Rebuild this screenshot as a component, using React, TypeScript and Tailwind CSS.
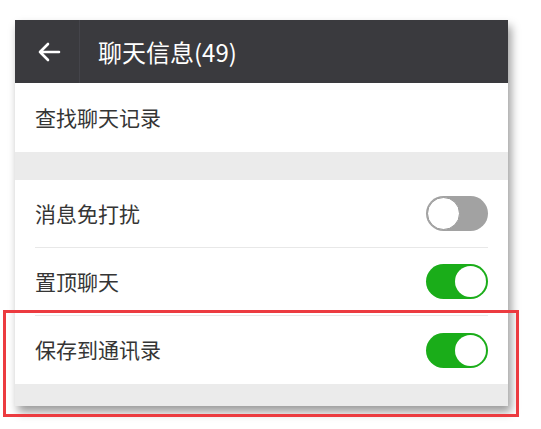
import React from 'react';

const font = { fontFamily: '"Noto Sans CJK SC", "Noto Sans", sans-serif' };

function Toggle({ on }: { on: boolean }) {
  return on ? (
    <div className="w-[62px] h-[35px] rounded-full bg-[#1aad19] flex items-center justify-end pr-[2px]">
      <div className="w-[31px] h-[31px] rounded-full bg-white" />
    </div>
  ) : (
    <div className="w-[62px] h-[35px] rounded-full bg-[#a2a2a2] flex items-center pl-[1px]">
      <div className="w-[33px] h-[33px] rounded-full bg-white border border-[#9a9a9a]" />
    </div>
  );
}

function Row({ label, on, divider }: { label: string; on?: boolean; divider?: boolean }) {
  return (
    <div className="px-[20px] bg-white">
      <div className={`h-[68px] flex items-center justify-between ${divider ? 'border-b border-[#e8e8e8]' : ''}`}>
        <span className="text-[21px] text-[#353535]">{label}</span>
        {on !== undefined && <Toggle on={on} />}
      </div>
    </div>
  );
}

export default function App() {
  return (
    <div className="relative w-[541px] h-[429px] bg-white overflow-hidden pt-[20px] pl-[15px]" style={font}>
      <div className="w-[493px] bg-[#ebebeb] shadow-[3px_6px_9px_rgba(0,0,0,0.4)]">
        <div className="h-[63px] bg-[#3a3a3e] flex items-center">
          <div className="w-[65px] h-full flex items-center pl-[22px] border-r border-[#44444a]">
            <svg width="24" height="22" viewBox="0 0 24 22" fill="none" stroke="white" strokeWidth="2.6" strokeLinecap="round" strokeLinejoin="round">
              <path d="M22 11H3M11 3L3 11l8 8" />
            </svg>
          </div>
          <span className="ml-[18px] text-[24px] text-white">聊天信息(49)</span>
        </div>
        <div className="px-[20px] bg-white h-[69px] flex items-center">
          <span className="text-[21px] text-[#353535]">查找聊天记录</span>
        </div>
        <div className="h-[28px]" />
        <Row label="消息免打扰" on={false} divider />
        <Row label="置顶聊天" on divider />
        <Row label="保存到通讯录" on />
        <div className="h-[22px]" />
      </div>
      <div className="absolute left-[3px] top-[310px] w-[516px] h-[107px] border-[3px] border-[#ec3b40]" />
    </div>
  );
}
